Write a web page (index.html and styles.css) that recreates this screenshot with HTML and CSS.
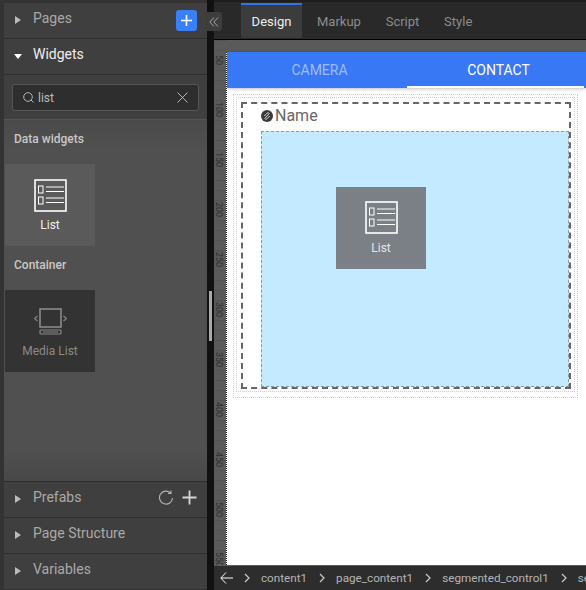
FILE: index.html
```html
<!DOCTYPE html>
<html lang="en">
<head>
    <meta charset="UTF-8">
    <meta name="viewport" content="width=device-width, initial-scale=1.0">
    <title>Studio</title>
    <link rel="stylesheet" href="styles.css">
</head>
<body>
    <div class="app">
        <aside class="sidebar">
            <div class="panel-row panel-pages">
                <svg class="caret" width="6" height="8" viewBox="0 0 6 8"><path d="M0 0l6 4-6 4z"/></svg>
                <span class="panel-title">Pages</span>
                <button class="add-button">
                    <svg width="13" height="13" viewBox="0 0 13 13"><path d="M6.5 1v11M1 6.5h11" stroke="#fff" stroke-width="1.6"/></svg>
                </button>
            </div>
            <div class="panel-row panel-open">
                <svg class="caret" width="8" height="6" viewBox="0 0 8 6"><path d="M0 1h8l-4 5z"/></svg>
                <span class="panel-title">Widgets</span>
            </div>
            <div class="search-wrap">
                <div class="search-box">
                    <svg width="11" height="11" viewBox="0 0 11 11" fill="none" stroke="#b5b5b5" stroke-width="1"><circle cx="5" cy="5" r="4.300"/><path d="M8 8l2.500 2.500"/></svg>
                    <span class="search-text">list</span>
                    <svg class="search-clear" width="11" height="11" viewBox="0 0 11 11" stroke="#b5b5b5" stroke-width="1"><path d="M.5.5l10 10M10.5.5l-10 10"/></svg>
                </div>
            </div>
            <div class="widget-list">
                <h4>Data widgets</h4>
                <div class="widget-tile">
                    <svg width="33" height="33" viewBox="0 0 33 33" fill="none" stroke="#fff"><rect x="1" y="1" width="31" height="31" stroke-width="1.6"/><rect x="4.5" y="7" width="4.5" height="7"/><rect x="4.5" y="18" width="4.5" height="7"/><path d="M12 8h18M12 12.500h18M12 19h18M12 23.500h18"/></svg>
                    <span>List</span>
                </div>
                <h4>Container</h4>
                <div class="widget-tile tile-off">
                    <svg width="33" height="28" viewBox="0 0 33 28" fill="none" stroke="#8a8a8a"><rect x="6" y="1" width="21" height="18" stroke-width="1.6"/><rect x="6" y="22" width="21" height="4" rx="1" stroke-width="1.2"/><path d="M3.500 8l-3 2.500 3 2.500M29.500 8l3 2.500-3 2.500M9 24h15" stroke-width="1.100"/></svg>
                    <span>Media List</span>
                </div>
            </div>
            <div class="panel-row panel-prefabs">
                <svg class="caret" width="6" height="8" viewBox="0 0 6 8"><path d="M0 0l6 4-6 4z"/></svg>
                <span class="panel-title">Prefabs</span>
                <svg class="refresh" width="15" height="15" viewBox="0 0 15 15" fill="none" stroke="#b5b5b5" stroke-width="1.100"><path d="M13.500 8a6.500 6.500 0 1 1-2-5.100M12 .5v3h-3"/></svg>
                <svg class="plus" width="15" height="15" viewBox="0 0 15 15"><path d="M7.500.5v14M.5 7.500h14" stroke="#d5d5d5" stroke-width="1.800"/></svg>
            </div>
            <div class="panel-row">
                <svg class="caret" width="6" height="8" viewBox="0 0 6 8"><path d="M0 0l6 4-6 4z"/></svg>
                <span class="panel-title">Page Structure</span>
            </div>
            <div class="panel-row">
                <svg class="caret" width="6" height="8" viewBox="0 0 6 8"><path d="M0 0l6 4-6 4z"/></svg>
                <span class="panel-title">Variables</span>
            </div>
        </aside>

        <div class="divider"><span class="grip"></span></div>

        <main class="main">
            <nav class="editor-tabs">
                <a class="editor-tab active">Design</a>
                <a class="editor-tab">Markup</a>
                <a class="editor-tab">Script</a>
                <a class="editor-tab">Style</a>
            </nav>
            <div class="workspace">
                <div class="ruler">
                    <span>50</span><span>100</span><span>150</span><span>200</span><span>250</span><span>300</span><span>350</span><span>400</span><span>450</span><span>500</span><span>550</span>
                </div>
                <div class="canvas">
                    <div class="canvas-top"></div>
                    <div class="page">
                        <div class="segments">
                            <div class="segment">CAMERA</div>
                            <div class="segment current">CONTACT</div>
                        </div>
                        <div class="outer-dots">
                            <div class="inner-dots">
                                <div class="live-list">
                                    <div class="list-label">
                                        <svg width="12" height="12" viewBox="0 0 13 13"><circle cx="6.500" cy="6.500" r="6.500" fill="#3a3a3a"/><path d="M4.500 8.500l4-4M3.500 6.500l3-3a1.500 1.500 0 0 1 2.500 .5M9.500 6.500l-3 3a1.500 1.500 0 0 1-2.500-.5" stroke="#dfe6ee" stroke-width="1" fill="none"/></svg>
                                        <span>Name</span>
                                    </div>
                                    <div class="drop-area">
                                        <div class="drop-tile">
                                            <svg width="33" height="33" viewBox="0 0 33 33" fill="none" stroke="#fff"><rect x="1" y="1" width="31" height="31" stroke-width="1.600"/><rect x="4.500" y="7" width="4.500" height="7"/><rect x="4.500" y="18" width="4.500" height="7"/><path d="M12 8h18M12 12.500h18M12 19h18M12 23.500h18"/></svg>
                                            <span>List</span>
                                        </div>
                                    </div>
                                </div>
                            </div>
                        </div>
                    </div>
                </div>
            </div>
            <div class="crumbs">
                <svg class="crumb-back" width="13" height="12" viewBox="0 0 13 12" fill="none" stroke="#fff" stroke-width="1"><path d="M6 .5L.8 6 6 11.500M1 6h12"/></svg>
                <svg class="sep" width="6" height="10" viewBox="0 0 6 10" fill="none" stroke="#ccc" stroke-width="1.200"><path d="M1 1l4 4-4 4"/></svg>
                <span>content1</span>
                <svg class="sep" width="6" height="10" viewBox="0 0 6 10" fill="none" stroke="#ccc" stroke-width="1.200"><path d="M1 1l4 4-4 4"/></svg>
                <span>page_content1</span>
                <svg class="sep" width="6" height="10" viewBox="0 0 6 10" fill="none" stroke="#ccc" stroke-width="1.200"><path d="M1 1l4 4-4 4"/></svg>
                <span>segmented_control1</span>
                <svg class="sep" width="6" height="10" viewBox="0 0 6 10" fill="none" stroke="#ccc" stroke-width="1.200"><path d="M1 1l4 4-4 4"/></svg>
                <span>segment_content</span>
            </div>
        </main>

        <button class="collapse">
            <svg width="10" height="10" viewBox="0 0 10 10" fill="none" stroke="#a8a8a8" stroke-width="1"><path d="M5 .5L.8 5 5 9.500M9 .5L4.800 5 9 9.500"/></svg>
        </button>
    </div>
</body>
</html>
```

FILE: styles.css
```css
/* General Styles */
html, body {
    margin: 0;
    padding: 0;
    height: 100%;
    overflow: hidden;
}

body {
    font-family: 'Roboto', 'Liberation Sans', sans-serif;
    background-color: #1c1c1c;
    color: #ccc;
}

.app {
    position: relative;
    display: flex;
    width: 586px;
    height: 590px;
    overflow: hidden;
}

/* Sidebar */
.sidebar {
    width: 203px;
    padding-left: 4px;
    padding-top: 3px;
    background-color: #333;
    display: flex;
    flex-direction: column;
    flex-shrink: 0;
}

.panel-row {
    height: 35px;
    flex-shrink: 0;
    display: flex;
    align-items: center;
    padding-left: 11px;
    background-color: #3f3f3f;
    border-bottom: 1px solid #2e2e2e;
}

.caret {
    fill: #bbb;
    margin-right: 12px;
    width: 6px;
    margin-top: -2px;
}

.panel-open .caret {
    fill: #fff;
    width: 8px;
    margin-left: -1px;
    margin-right: 11px;
}

.panel-title {
    font-size: 14px;
    color: #a9a9a9;
    margin-top: -5px;
}

.panel-open .panel-title {
    color: #eee;
}

.add-button {
    margin-left: auto;
    margin-right: 10px;
    align-self: flex-start;
    margin-top: 7px;
    width: 21px;
    height: 21px;
    padding: 0;
    border: none;
    border-radius: 3px;
    background-color: #3a7ff6;
    display: flex;
    align-items: center;
    justify-content: center;
}

.search-wrap {
    height: 45px;
    flex-shrink: 0;
    padding: 9px 8px 0 8px;
    box-sizing: border-box;
    background-color: #3f3f3f;
    border-bottom: 1px solid #555;
}

.search-box {
    height: 27px;
    box-sizing: border-box;
    display: flex;
    align-items: center;
    padding: 0 10px;
    background-color: #2e2e2e;
    border: 1px solid #565656;
    border-radius: 3px;
}

.search-text {
    margin-left: 4px;
    font-size: 12px;
    color: #bbb;
}

.search-clear {
    margin-left: auto;
}

.widget-list {
    flex: 1;
    background: linear-gradient(#4a4a4a, #505050 30px, #505050 330px, #484848);
    padding-left: 1px;
}

.widget-list h4 {
    margin: 12px 0 17px 9px;
    font-size: 12px;
    line-height: 15px;
    font-weight: 500;
    color: #c8c8c8;
}

.widget-tile {
    width: 90px;
    height: 82px;
    box-sizing: border-box;
    padding-top: 15px;
    background-color: #5a5a5a;
    display: flex;
    flex-direction: column;
    align-items: center;
}

.widget-tile span {
    margin-top: 6px;
    font-size: 12px;
    line-height: 15px;
    color: #f0f0f0;
}

.tile-off {
    padding-top: 18px;
    background-color: #333;
}

.tile-off span {
    margin-top: 8px;
    color: #8a8a8a;
}

.panel-prefabs {
    border-top: 1px solid #2e2e2e;
}

.refresh {
    margin-left: auto;
    margin-right: 8px;
    margin-top: -5px;
}

.plus {
    margin-right: 10px;
    margin-top: -5px;
}

/* Divider between sidebar and editor */
.divider {
    width: 7px;
    flex-shrink: 0;
    background-color: #111;
    position: relative;
}

.grip {
    position: absolute;
    left: 2px;
    top: 291px;
    width: 3px;
    height: 50px;
    background-color: #aaa;
}

.collapse {
    position: absolute;
    left: 206px;
    top: 12px;
    width: 16px;
    height: 19px;
    padding: 0;
    border: none;
    border-radius: 0 3px 3px 0;
    background-color: #3d3d3d;
    display: flex;
    align-items: center;
    justify-content: center;
}

/* Editor */
.main {
    flex: 1;
    min-width: 0;
    display: flex;
    flex-direction: column;
}

.editor-tabs {
    height: 39px;
    flex-shrink: 0;
    box-sizing: border-box;
    padding: 3px 0 0 27px;
    display: flex;
    background-color: #292929;
    box-shadow: inset 0 2px 0 #1d1d1d;
}

.editor-tab {
    height: 35px;
    box-sizing: border-box;
    padding: 0 12.4px;
    display: flex;
    align-items: center;
    font-size: 13px;
    color: #8c8c8c;
    border-top: 2px solid transparent;
}

.editor-tab.active {
    width: 61px;
    padding: 0;
    margin-right: 2.6px;
    justify-content: center;
    color: #eee;
    background-color: #3c3c3c;
    border-top-color: #2f74e6;
}

.workspace {
    flex: 1;
    min-height: 0;
    display: flex;
    background-color: #000;
    padding-top: 1px;
}

.ruler {
    width: 12px;
    flex-shrink: 0;
    overflow: hidden;
    background-color: #5a5a5a;
    background-image: repeating-linear-gradient(#535353 0 1px, transparent 1px 10px);
}

.ruler span {
    display: flex;
    align-items: center;
    justify-content: center;
    height: 50px;
    font-size: 9px;
    color: #2e2e2e;
    writing-mode: vertical-rl;
}

.ruler span:first-child {
    margin-top: -5px;
}

.canvas {
    flex: 1;
    min-width: 0;
    background-color: #5a5a5a;
    overflow: hidden;
}

.canvas-top {
    height: 12px;
}

.page {
    height: 513px;
    background-color: #fff;
    border-left: 1px dotted #222;
}

.segments {
    height: 36px;
    display: flex;
    background-color: #3878f5;
    box-shadow: 0 1px 3px rgba(0, 0, 0, 0.25);
}

.segment {
    width: 180px;
    box-sizing: border-box;
    padding-left: 5px;
    display: flex;
    align-items: center;
    justify-content: center;
    font-size: 14px;
    color: #9dbdf8;
}

.segment.current {
    color: #fff;
    border-bottom: 2px solid #fff;
    padding: 1px 0 0 6px;
    width: 177px;
}

.outer-dots {
    margin: 6px 8px 0 6px;
    width: 345px;
    box-sizing: border-box;
    height: 304px;
    padding: 2px;
    border: 1px dotted #ccc;
}

.inner-dots {
    height: 295px;
    box-sizing: border-box;
    padding: 4px;
    border: 1px dotted #ccc;
}

.live-list {
    width: 330px;
    height: 287px;
    box-sizing: border-box;
    padding: 0 0 0 18px;
    border: 2px dashed #666;
}

.list-label {
    height: 27px;
    box-sizing: border-box;
    padding-bottom: 4px;
    display: flex;
    align-items: center;
    gap: 2px;
    font-size: 16px;
    color: #666;
}

.drop-area {
    width: 308px;
    height: 256px;
    box-sizing: border-box;
    padding: 55px 0 0 74px;
    background-color: #c4eaff;
    border: 1px dashed #8b9aa3;
}

.drop-tile {
    width: 90px;
    height: 82px;
    box-sizing: border-box;
    padding-top: 14px;
    background-color: #7a8085;
    display: flex;
    flex-direction: column;
    align-items: center;
}

.drop-tile span {
    margin-top: 7px;
    font-size: 12px;
    line-height: 15px;
    color: #e4e6e8;
}

/* Breadcrumb bar */
.crumbs {
    height: 25px;
    flex-shrink: 0;
    box-sizing: border-box;
    padding-left: 6px;
    display: flex;
    align-items: center;
    white-space: nowrap;
    font-size: 11.7px;
    color: #b5b5b5;
    background-color: #2d2d2d;
    border-top: 1px solid #5a5a5a;
}

.crumb-back {
    margin-right: 11px;
    flex-shrink: 0;
}

.sep {
    flex-shrink: 0;
    margin-right: 11px;
}

.crumbs span {
    margin-right: 12px;
}
```
